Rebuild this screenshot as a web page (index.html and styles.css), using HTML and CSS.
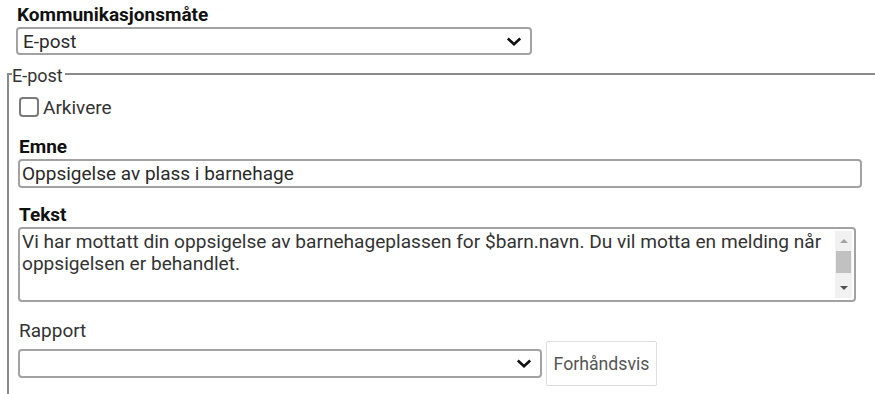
FILE: index.html
```html
<!DOCTYPE html>
<html>
<head>
    <meta charset="UTF-8">
    <title>Kommunikasjon</title>
    <link rel="stylesheet" href="styles.css">
</head>
<body>
    <div class="form">
        <label class="field-label">Kommunikasjonsmåte</label>
        <div class="select select-top">
            <span>E-post</span>
            <svg class="chevron" width="16" height="9" viewBox="0 0 16 9"><path d="M1.8 1.5 L8 7.2 L14.2 1.5" fill="none" stroke="#111" stroke-width="2.6"/></svg>
        </div>

        <fieldset class="group">
            <legend>E-post</legend>

            <label class="check-row">
                <span class="checkbox"></span>
                <span>Arkivere</span>
            </label>

            <label class="field-label">Emne</label>
            <div class="input">Oppsigelse av plass i barnehage</div>

            <label class="field-label">Tekst</label>
            <div class="textarea">
                <div class="textarea-text">Vi har mottatt din oppsigelse av barnehageplassen for $barn.navn. Du vil motta en melding når oppsigelsen er behandlet.</div>
                <div class="scrollbar">
                    <span class="arrow-up"></span>
                    <span class="thumb"></span>
                    <span class="arrow-down"></span>
                </div>
            </div>

            <label class="field-label plain">Rapport</label>
            <div class="report-row">
                <div class="select select-report">
                    <span></span>
                    <svg class="chevron" width="16" height="9" viewBox="0 0 16 9"><path d="M1.8 1.5 L8 7.2 L14.2 1.5" fill="none" stroke="#111" stroke-width="2.6"/></svg>
                </div>
                <button class="btn">Forhåndsvis</button>
            </div>
        </fieldset>
    </div>
</body>
</html>
```

FILE: styles.css
```css
:root {
    --border-color: #a2a2a2;
    --text-color: #2a2a2a;
    --line-color: #8a8a8a;
}

body {
    margin: 0;
    background: #ffffff;
    font-family: 'Roboto', 'Liberation Sans', sans-serif;
    color: var(--text-color);
    overflow: hidden;
    height: 394px;
}

.form {
    padding-top: 4px;
}

.field-label {
    display: block;
    font-size: 19px;
    font-weight: bold;
    line-height: 22px;
    color: #111111;
    margin-left: 17px;
}

.field-label.plain {
    font-weight: normal;
    color: #333333;
}

.select {
    display: flex;
    align-items: center;
    justify-content: space-between;
    box-sizing: border-box;
    height: 28px;
    border: 2px solid var(--border-color);
    border-radius: 4px;
    padding: 0 8px 0 5px;
    font-size: 19px;
    background: #ffffff;
}

.select-top {
    width: 516px;
    margin: 1px 0 0 16px;
}

.chevron {
    display: block;
}

.group {
    margin: 8px 0 0 7px;
    width: 1000px;
    border: 0;
    border-top: 2px solid var(--line-color);
    border-left: 2px solid var(--line-color);
    padding: 0 0 40px 9px;
}

.group legend {
    font-size: 18px;
    margin-left: -6px;
    padding: 5px 2px 0 0;
    line-height: 16px;
    color: #333333;
}

.check-row {
    display: flex;
    align-items: center;
    gap: 4px;
    height: 20px;
    margin: 13px 0 0 1px;
    font-size: 19px;
    color: #333333;
}

.checkbox {
    box-sizing: border-box;
    width: 20px;
    height: 20px;
    border: 2px solid #7a7a7a;
    border-radius: 4px;
}

.group .field-label {
    margin-left: 1px;
}

.check-row + .field-label {
    margin-top: 19px;
}

.input {
    box-sizing: border-box;
    width: 844px;
    height: 29px;
    border: 2px solid var(--border-color);
    border-radius: 4px;
    padding: 0 2px;
    font-size: 19px;
    line-height: 25px;
    margin-top: 1px;
}

.input + .field-label {
    margin-top: 16px;
}

.textarea {
    box-sizing: border-box;
    display: flex;
    width: 838px;
    height: 75px;
    border: 2px solid var(--border-color);
    border-radius: 4px;
    margin-top: 1px;
    overflow: hidden;
}

.textarea-text {
    flex: 1;
    padding: 2px 2px;
    font-size: 19.1px;
    line-height: 22px;
    color: #333333;
}

.scrollbar {
    display: flex;
    flex-direction: column;
    align-items: center;
    width: 17px;
    margin: 2px 2px 2px 0;
    background: #f1f1f1;
}

.arrow-up {
    margin-top: 8px;
    border-left: 4px solid transparent;
    border-right: 4px solid transparent;
    border-bottom: 4px solid #a3a3a3;
}

.thumb {
    width: 15px;
    height: 22px;
    margin-top: 8px;
    background: #c1c1c1;
}

.arrow-down {
    margin-top: auto;
    margin-bottom: 8px;
    border-left: 4px solid transparent;
    border-right: 4px solid transparent;
    border-top: 4px solid #505050;
}

.textarea + .field-label {
    margin-top: 18px;
}

.report-row {
    display: flex;
    align-items: center;
    gap: 4px;
    margin-top: -1px;
}

.select-report {
    width: 524px;
    height: 29px;
}

.btn {
    box-sizing: border-box;
    height: 45px;
    width: 111px;
    padding: 0;
    background: #ffffff;
    border: 1px solid #dedede;
    border-radius: 2px;
    font-family: inherit;
    font-size: 17.7px;
    color: #555555;
}
```
